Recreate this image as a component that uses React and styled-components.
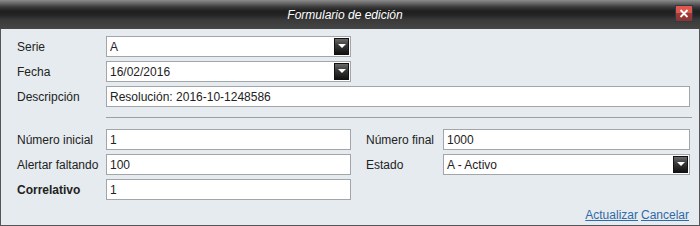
import React from 'react';
import styled, { createGlobalStyle } from 'styled-components';

const GlobalStyle = createGlobalStyle`
  html, body {
    margin: 0;
    padding: 0;
    background: #fff;
  }
  body {
    font-family: "Liberation Sans", Arial, sans-serif;
    font-size: 12px;
    color: #222;
  }
`;

const Window = styled.div`
  width: 700px;
  height: 226px;
  box-sizing: border-box;
  border: 1px solid #555;
  border-top: none;
  background: #e6ebef;
  display: flex;
  flex-direction: column;
`;

const TitleBar = styled.div`
  height: 29px;
  margin: 0 -1px;
  background: linear-gradient(
    to bottom,
    #8c8c8c 0px,
    #6a6a6a 3px,
    #3a3a3a 7px,
    #1f1f1f 11px,
    #242424 15px,
    #3a3a3a 20px,
    #454545 29px
  );
  display: flex;
  align-items: center;
  justify-content: center;
  position: relative;
`;

const Title = styled.span`
  color: #fff;
  font-style: italic;
  font-size: 12px;
  margin-left: -10px;
`;

const CloseButton = styled.div`
  position: absolute;
  right: 7px;
  top: 5px;
  width: 16px;
  height: 15px;
  border: 1px solid #2e3a48;
  background: linear-gradient(to bottom, #e2574c 0, #d9584e 50%, #9c3b38 50%, #8c3532 100%);
  display: flex;
  align-items: center;
  justify-content: center;
`;

const Body = styled.div`
  flex: 1;
  padding: 7px 9px 0 16px;
  display: flex;
  flex-direction: column;
`;

const TopGrid = styled.div`
  display: grid;
  grid-template-columns: 89px 245px 1fr;
  grid-auto-rows: 21px;
  row-gap: 4px;
  align-items: center;
`;

const BottomGrid = styled.div`
  display: grid;
  grid-template-columns: 89px 245px 15px 77px 1fr;
  grid-auto-rows: 21px;
  row-gap: 4px;
  align-items: center;
`;

const Label = styled.label`
  font-weight: ${p => (p.$bold ? 'bold' : 'normal')};
  color: #222;
  white-space: nowrap;
`;

const Field = styled.div`
  height: 21px;
  box-sizing: border-box;
  border: 1px solid #a3a6a9;
  background: #fff;
  padding: 0 3px;
  display: flex;
  align-items: center;
  position: relative;
  color: #222;
  grid-column: ${p => p.$span || 'auto'};
`;

const FieldText = styled.span`
  flex: 1;
  white-space: nowrap;
`;

const DropButton = styled.div`
  position: absolute;
  right: 1px;
  top: 1px;
  width: 15px;
  height: 17px;
  box-sizing: border-box;
  border: 1px solid #111;
  background: linear-gradient(to bottom, #6a6a6a 0, #3a3a3a 40%, #111 100%);
  display: flex;
  justify-content: center;
  padding-top: 5px;
`;

const Arrow = styled.div`
  width: 0;
  height: 0;
  border-left: 4px solid transparent;
  border-right: 4px solid transparent;
  border-top: 4px solid #fff;
`;

const Separator = styled.div`
  height: 1px;
  background: #9c9fa2;
  margin: 10px -2px 11px 89px;
`;

const Spacer = styled.div``;

const Actions = styled.div`
  display: flex;
  justify-content: flex-end;
  gap: 3px;
  margin-top: 8px;
  margin-right: 1px;
`;

const Link = styled.a`
  color: #2f6aa6;
  text-decoration: underline;
  cursor: pointer;
`;

const Select = ({ value, span }) => (
  <Field $span={span}>
    <FieldText>{value}</FieldText>
    <DropButton>
      <Arrow />
    </DropButton>
  </Field>
);

const Input = ({ value, span }) => (
  <Field $span={span}>
    <FieldText>{value}</FieldText>
  </Field>
);

const App = () => {
  return (
    <>
      <GlobalStyle />
      <Window>
        <TitleBar>
          <Title>Formulario de edición</Title>
          <CloseButton>
            <svg width="10" height="9" viewBox="0 0 10 9">
              <path d="M1.5 1 L8.5 8 M8.5 1 L1.5 8" stroke="#fff" strokeWidth="1.8" />
            </svg>
          </CloseButton>
        </TitleBar>
        <Body>
          <TopGrid>
            <Label>Serie</Label>
            <Select value="A" />
            <Spacer />
            <Label>Fecha</Label>
            <Select value="16/02/2016" />
            <Spacer />
            <Label>Descripción</Label>
            <Input value="Resolución: 2016-10-1248586" span="2 / 4" />
          </TopGrid>
          <Separator />
          <BottomGrid>
            <Label>Número inicial</Label>
            <Input value="1" />
            <Spacer />
            <Label>Número final</Label>
            <Input value="1000" />
            <Label>Alertar faltando</Label>
            <Input value="100" />
            <Spacer />
            <Label>Estado</Label>
            <Select value="A - Activo" />
            <Label $bold>Correlativo</Label>
            <Input value="1" />
          </BottomGrid>
          <Actions>
            <Link>Actualizar</Link>
            <Link>Cancelar</Link>
          </Actions>
        </Body>
      </Window>
    </>
  );
};

export default App;
